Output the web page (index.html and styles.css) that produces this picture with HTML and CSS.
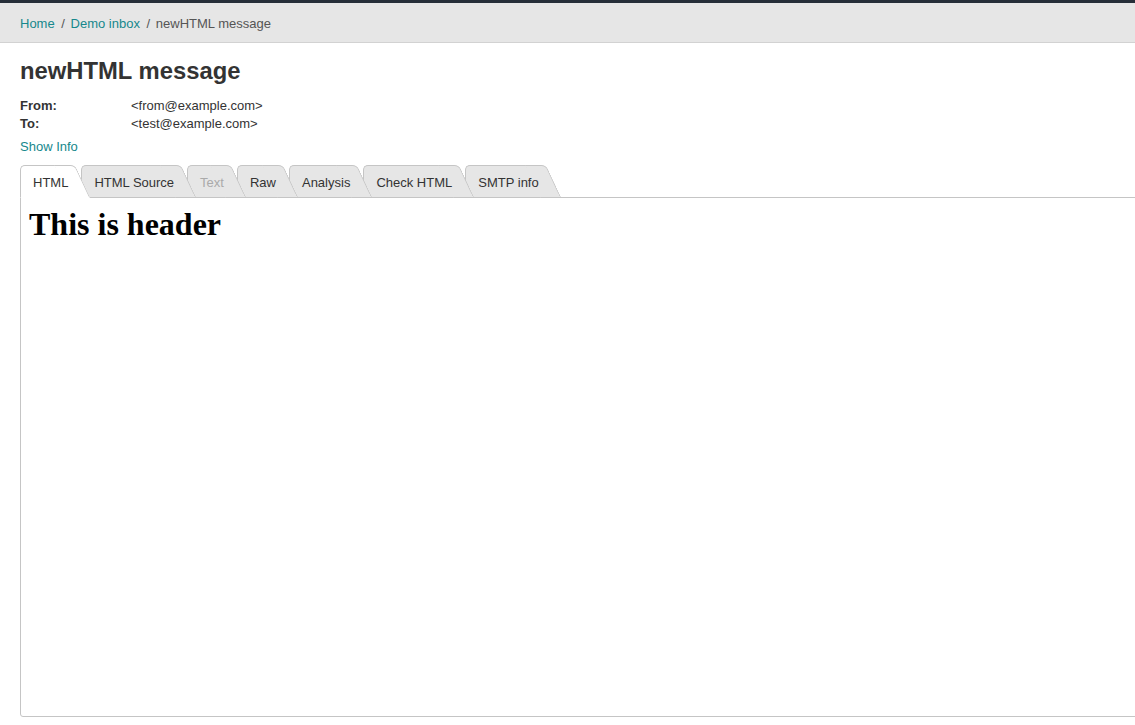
FILE: index.html
```html
<!DOCTYPE html>
<html lang="en">
<head>
<meta charset="utf-8">
<title>newHTML message</title>
<link rel="stylesheet" href="styles.css">
</head>
<body>
<div class="topbar"></div>
<nav class="breadcrumb">
  <a href="#" class="crumb-link">Home</a>
  <span class="sep">/</span>
  <a href="#" class="crumb-link">Demo inbox</a>
  <span class="sep">/</span>
  <span class="crumb-current">newHTML message</span>
</nav>
<main class="content">
  <h2 class="title">newHTML message</h2>
  <div class="meta">
    <div class="meta-row"><span class="meta-label">From:</span><span class="meta-value">&lt;from@example.com&gt;</span></div>
    <div class="meta-row"><span class="meta-label">To:</span><span class="meta-value">&lt;test@example.com&gt;</span></div>
  </div>
  <a href="#" class="show-info">Show Info</a>
  <div class="tabs">
    <div class="tab active">HTML</div>
    <div class="tab">HTML Source</div>
    <div class="tab disabled">Text</div>
    <div class="tab">Raw</div>
    <div class="tab">Analysis</div>
    <div class="tab">Check HTML</div>
    <div class="tab">SMTP info</div>
  </div>
  <section class="panel">
    <h1 class="msg-header">This is header</h1>
  </section>
</main>
</body>
</html>
```
FILE: styles.css
```css
html {
  overflow: hidden;
}
body {
  margin: 0;
  font-family: "Liberation Sans", Arial, sans-serif;
  font-size: 13px;
  color: #333;
  background: #fff;
}
.topbar {
  height: 3px;
  background: #262e38;
}
.breadcrumb {
  background: #e6e6e6;
  border-bottom: 1px solid #d2d2d2;
  padding: 12px 20px 9px;
  line-height: 18px;
  font-size: 13px;
  color: #555;
}
.crumb-link {
  color: #16888c;
  text-decoration: none;
}
.sep {
  margin: 0 2px 0 3px;
  color: #555;
}
.content {
  padding: 0 0 0 20px;
}
.title {
  margin: 14px 0 0;
  font-size: 23.8px;
  line-height: 27px;
  font-weight: bold;
  color: #333;
}
.meta {
  margin-top: 13px;
}
.meta-row {
  display: flex;
  line-height: 18px;
  font-size: 13px;
  color: #333;
}
.meta-label {
  width: 111px;
  font-weight: bold;
}
.show-info {
  display: block;
  margin-top: 5px;
  line-height: 18px;
  color: #16888c;
  text-decoration: none;
  width: max-content;
}
.tabs {
  display: flex;
  margin-top: 9px;
  margin-bottom: -1px;
  position: relative;
  z-index: 2;
}
.tab {
  position: relative;
  box-sizing: border-box;
  height: 33px;
  padding: 8px 2px 0 12px;
  margin-right: 11px;
  line-height: 18px;
  background: #e6e6e6;
  border-top: 1px solid #c5c5c5;
  border-left: 1px solid #c5c5c5;
  border-bottom: 1px solid #c5c5c5;
  border-top-left-radius: 5px;
  color: #333;
  white-space: nowrap;
}
.tab::after {
  content: "";
  position: absolute;
  z-index: -1;
  top: -1px;
  bottom: -1px;
  left: calc(100% - 16px);
  width: 21px;
  box-sizing: border-box;
  background: #e6e6e6;
  border-top: 1px solid #c5c5c5;
  border-right: 1px solid #c5c5c5;
  border-bottom: 1px solid #c5c5c5;
  border-top-right-radius: 5px;
  transform-origin: top left;
  transform: skewX(25deg);
}
.tab.active {
  background: #fff;
  border-bottom-color: #fff;
}
.tab.active::after {
  background: #fff;
  border-bottom-color: #fff;
}
.tab.disabled {
  color: #aaa;
}
.tab:nth-child(1) { z-index: 7; }
.tab:nth-child(2) { z-index: 6; }
.tab:nth-child(3) { z-index: 5; }
.tab:nth-child(4) { z-index: 4; }
.tab:nth-child(5) { z-index: 3; }
.tab:nth-child(6) { z-index: 2; }
.tab:nth-child(7) { z-index: 1; }
.panel {
  position: relative;
  z-index: 1;
  box-sizing: border-box;
  height: 520px;
  width: calc(100% + 20px);
  border: 1px solid #c5c5c5;
  border-bottom-left-radius: 3px;
  padding: 8px 8px;
  background: #fff;
}
.msg-header {
  margin: 0;
  font-family: "Liberation Serif", "Times New Roman", serif;
  font-size: 32px;
  line-height: 37px;
  font-weight: bold;
  color: #000;
}
```
